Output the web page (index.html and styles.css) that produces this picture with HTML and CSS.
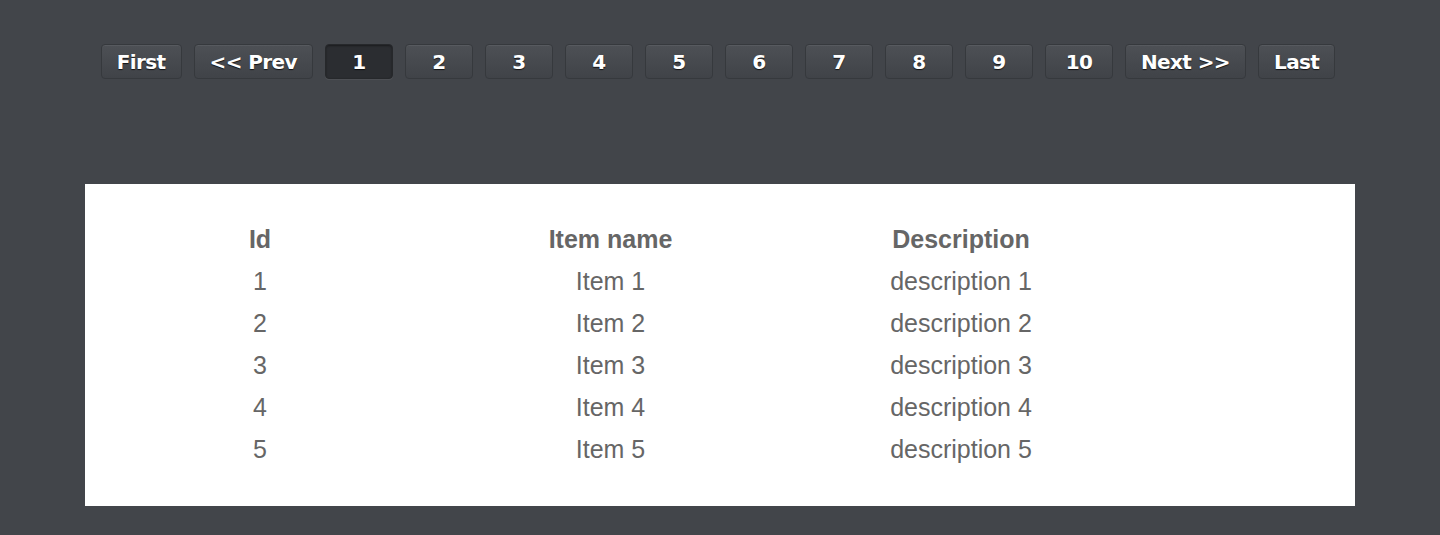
FILE: index.html
```html
<!DOCTYPE html>
<html>
<head>
<meta charset="utf-8">
<link rel="stylesheet" href="styles.css">
</head>
<body>
<nav class="pager">
  <a class="btn">First</a>
  <a class="btn">&lt;&lt; Prev</a>
  <a class="btn num active">1</a>
  <a class="btn num">2</a>
  <a class="btn num">3</a>
  <a class="btn num">4</a>
  <a class="btn num">5</a>
  <a class="btn num">6</a>
  <a class="btn num">7</a>
  <a class="btn num">8</a>
  <a class="btn num">9</a>
  <a class="btn num">10</a>
  <a class="btn">Next &gt;&gt;</a>
  <a class="btn">Last</a>
</nav>
<main class="panel">
  <div class="table">
    <div class="th">Id</div><div class="th">Item name</div><div class="th">Description</div>
    <div class="td">1</div><div class="td">Item 1</div><div class="td">description 1</div>
    <div class="td">2</div><div class="td">Item 2</div><div class="td">description 2</div>
    <div class="td">3</div><div class="td">Item 3</div><div class="td">description 3</div>
    <div class="td">4</div><div class="td">Item 4</div><div class="td">description 4</div>
    <div class="td">5</div><div class="td">Item 5</div><div class="td">description 5</div>
  </div>
</main>
</body>
</html>
```
FILE: styles.css
```css
html, body {
  margin: 0;
  padding: 0;
  background: #42454a;
  height: 100%;
}
body {
  padding-top: 44px;
  box-sizing: border-box;
}
.pager {
  display: flex;
  justify-content: center;
  gap: 12px;
  margin-right: 4px;
}
.btn {
  box-sizing: border-box;
  height: 35px;
  min-width: 68px;
  padding: 0 15px;
  display: flex;
  align-items: center;
  justify-content: center;
  font-family: "DejaVu Sans", sans-serif;
  font-weight: bold;
  font-size: 20px;
  letter-spacing: -0.6px;
  color: #fff;
  text-shadow: 0 1px 1px rgba(0,0,0,0.75);
  background: linear-gradient(#4d5055, #404348);
  border: 1px solid #36393d;
  border-radius: 4px;
  box-shadow: inset 0 1px 0 rgba(255,255,255,0.06);
}
.btn.active {
  background: #2b2d31;
  border-color: #26282b;
  box-shadow: inset 0 1px 2px rgba(0,0,0,0.4), 0 1px 0 rgba(255,255,255,0.06);
}
.panel {
  margin: 105px 85px 0 85px;
  background: #fff;
  height: 322px;
  box-sizing: border-box;
  padding-top: 34px;
}
.table {
  display: grid;
  grid-template-columns: 350px 351px 350px;
  grid-auto-rows: 42px;
  font-family: "Liberation Sans", Arial, sans-serif;
  font-size: 25px;
  color: #666;
}
.th, .td {
  display: flex;
  align-items: center;
  justify-content: center;
}
.th {
  font-weight: bold;
}
```
